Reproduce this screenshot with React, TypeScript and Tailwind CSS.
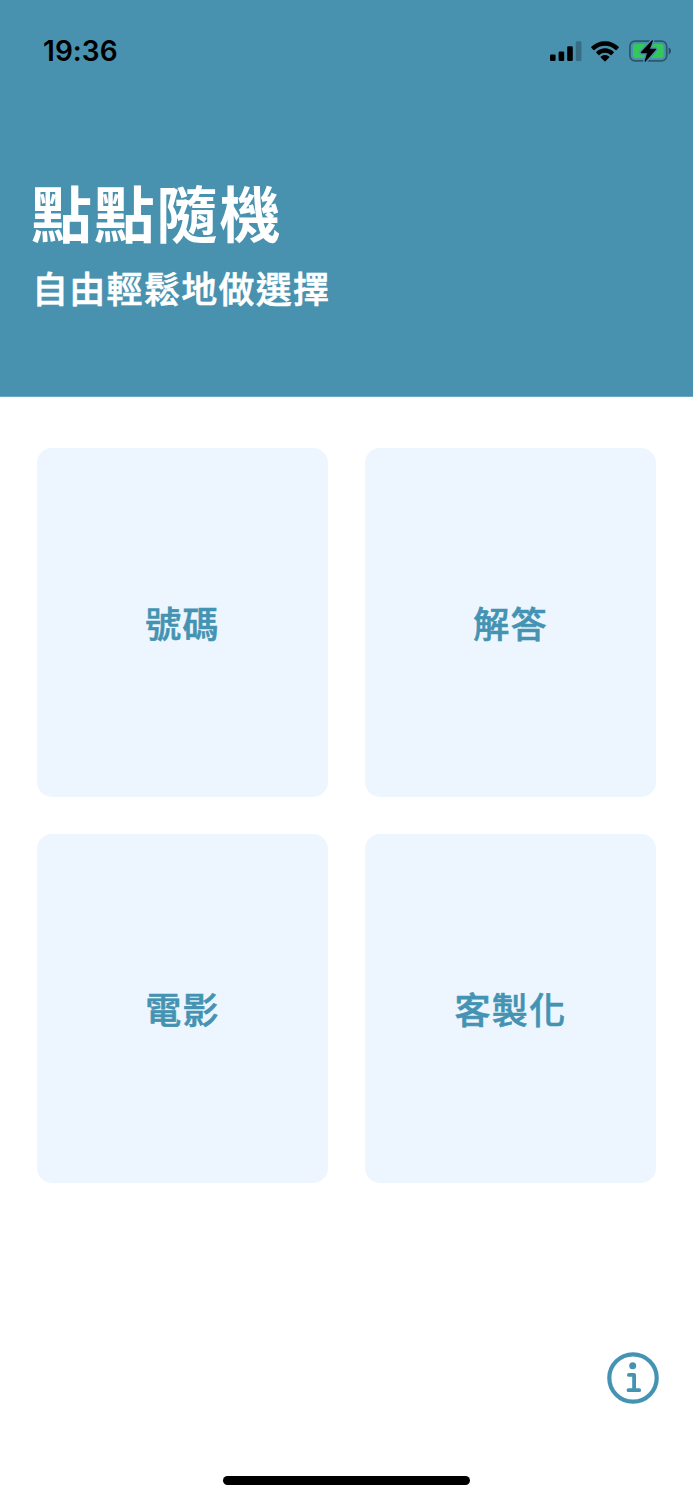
import React from "react";

const CATEGORIES = ["號碼", "解答", "電影", "客製化"];

const SignalIcon = () => (
  <svg width="32" height="20" viewBox="0 0 32 20">
    <rect x="0" y="13.5" width="5.6" height="6.5" rx="1.3" />
    <rect x="8.6" y="10.4" width="5.6" height="9.6" rx="1.3" />
    <rect x="17.2" y="5.3" width="5.6" height="14.7" rx="1.3" />
    <rect x="25.8" y="0.3" width="5.6" height="19.7" rx="1.3" opacity="0.25" />
  </svg>
);

const WifiIcon = () => (
  <svg width="28" height="21" viewBox="0 0 28 21">
    <path d="M14 0.2C19.2 0.2 24 2.2 27.7 5.8C28 6.1 28 6.5 27.7 6.8L25.5 9C25.2 9.3 24.8 9.3 24.5 9C21.7 6.3 18 4.8 14 4.8C10 4.8 6.3 6.3 3.5 9C3.2 9.3 2.8 9.3 2.5 9L0.3 6.8C0 6.5 0 6.1 0.3 5.8C4 2.2 8.8 0.2 14 0.2Z" />
    <path d="M14 7.2C17.2 7.2 20.3 8.4 22.7 10.7C23 11 23 11.4 22.7 11.7L20.5 13.9C20.2 14.2 19.8 14.2 19.5 13.9C18 12.5 16.1 11.7 14 11.7C11.9 11.7 10 12.5 8.5 13.9C8.2 14.2 7.8 14.2 7.5 13.9L5.3 11.7C5 11.4 5 11 5.3 10.7C7.7 8.4 10.8 7.2 14 7.2Z" />
    <path d="M14 14C15.7 14 17.1 14.6 18.2 15.6C18.5 15.9 18.5 16.3 18.2 16.6L14.5 20.3C14.2 20.6 13.8 20.6 13.5 20.3L9.8 16.6C9.5 16.3 9.5 15.9 9.8 15.6C10.9 14.6 12.3 14 14 14Z" />
  </svg>
);

const BatteryIcon = () => (
  <svg width="43" height="24" viewBox="0 0 43 24">
    <rect
      x="0.9"
      y="2.1"
      width="36.8"
      height="19.8"
      rx="5.2"
      fill="none"
      stroke="#000"
      strokeOpacity="0.4"
      strokeWidth="1.7"
    />
    <path d="M39.6 8.6C41.2 9.2 42 10.4 42 12C42 13.6 41.2 14.8 39.6 15.4Z" opacity="0.45" />
    <rect x="4" y="5" width="30.6" height="14" rx="2.8" fill="#34c759" />
    <path
      d="M22.8 1.4L12 13.1C11.6 13.6 11.9 14.2 12.5 14.2H18L15.6 22.1C15.4 22.9 16.2 23.1 16.6 22.6L27 10.8C27.4 10.3 27.1 9.7 26.5 9.7H21L23.8 2.2C24.1 1.4 23.3 0.9 22.8 1.4Z"
      stroke="#4892af"
      strokeWidth="3"
      strokeLinejoin="round"
      paintOrder="stroke"
    />
  </svg>
);

const StatusBar = () => (
  <div className="flex h-[102px] items-center justify-between pl-[43px] pr-[21px]">
    <span className="font-['Inter',sans-serif] text-[28px] leading-none font-semibold tracking-[0.05px] text-black">
      19:36
    </span>
    <div className="flex items-center">
      <SignalIcon />
      <span className="w-[9px]" />
      <WifiIcon />
      <span className="w-[10px]" />
      <BatteryIcon />
    </div>
  </div>
);

const InfoButton = () => (
  <button aria-label="關於" className="h-[52px] w-[52px] text-[#4593b2]">
    <svg
      width="52"
      height="52"
      viewBox="0 0 52 52"
      fill="none"
      stroke="currentColor"
      strokeWidth="4.2"
      strokeLinecap="round"
      strokeLinejoin="round"
    >
      <circle cx="26" cy="26" r="23.7" />
      <path d="M21.9 22.9H27.1V38.2M21.5 38.2H32.2" strokeWidth="3.8" />
      <circle cx="25.7" cy="13.8" r="3.5" fill="currentColor" stroke="none" />
    </svg>
  </button>
);

const App = () => {
  return (
    <div className="flex h-[1500px] w-[693px] flex-col overflow-hidden bg-white font-['Noto_Sans_CJK_TC',sans-serif]">
      <header className="h-[397px] border-b border-[#67aac2] bg-[#4892af]">
        <StatusBar />
        <div className="pl-[31px] pt-[75px] text-white">
          <h1 className="text-[61px] leading-[70px] font-bold tracking-[1.8px]">
            點點隨機
          </h1>
          <p className="mt-[15px] pl-px text-[36px] leading-[50px] font-medium tracking-[1.3px] [-webkit-text-stroke:0.6px_currentColor]">
            自由輕鬆地做選擇
          </p>
        </div>
      </header>

      <main className="grid grid-cols-2 gap-[37px] px-[37px] pt-[51px]">
        {CATEGORIES.map((name) => (
          <button
            key={name}
            className="flex h-[349px] items-center justify-center rounded-[15px] bg-[#edf6ff] pb-[2px] text-[36px] leading-none font-medium tracking-[1.3px] text-[#4593b2] [-webkit-text-stroke:0.6px_currentColor]"
          >
            {name}
          </button>
        ))}
      </main>

      <div className="mt-[169px] flex justify-end pr-[34px]">
        <InfoButton />
      </div>

      <div className="mx-auto mt-auto mb-[15px] h-[9px] w-[247px] rounded-full bg-black" />
    </div>
  );
};

export default App;
